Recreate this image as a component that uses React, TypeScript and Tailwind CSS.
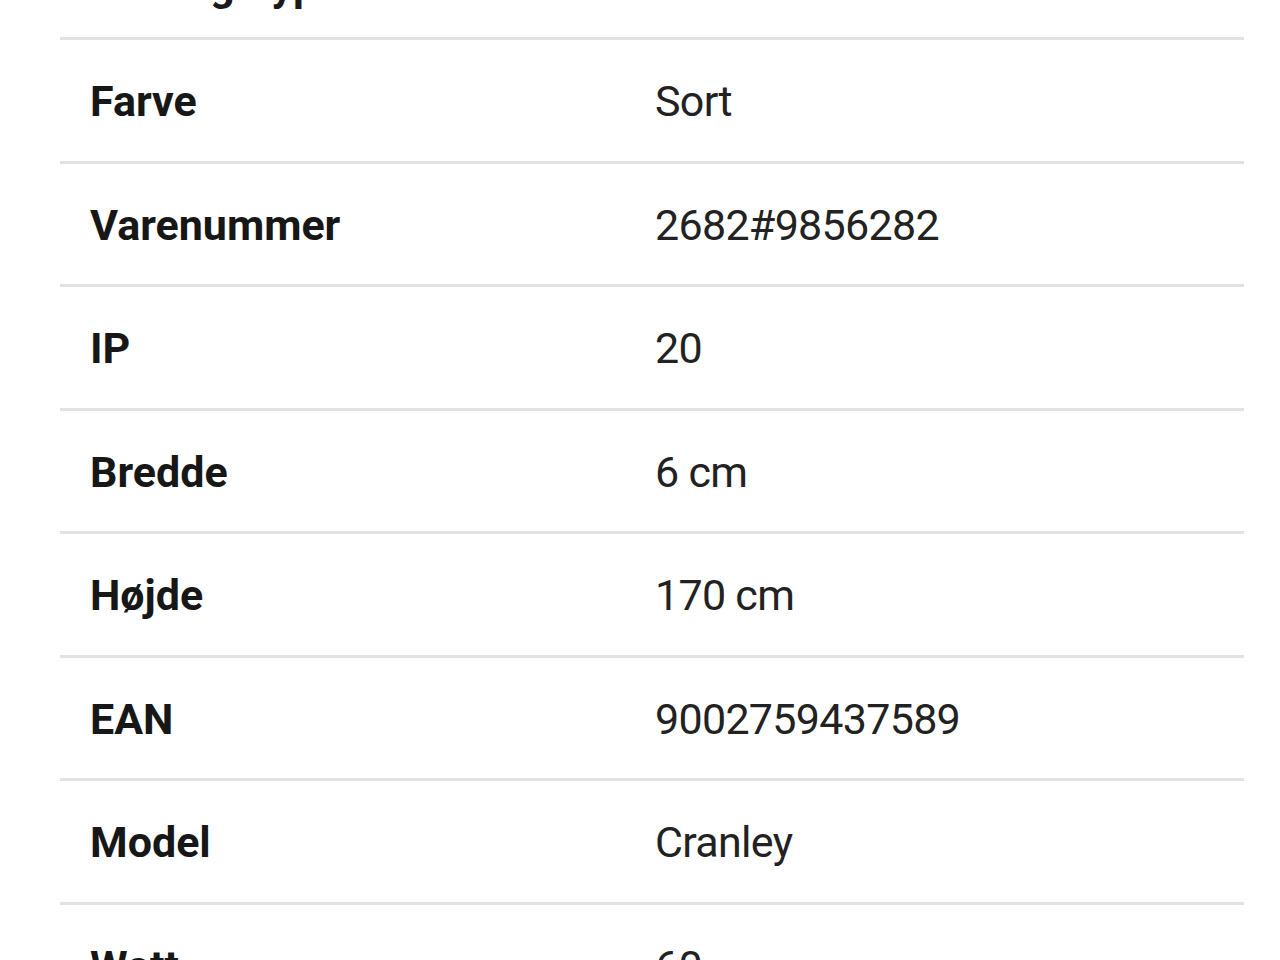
import React from "react";

const rows: [string, string][] = [
  ["Farve", "Sort"],
  ["Varenummer", "2682#9856282"],
  ["IP", "20"],
  ["Bredde", "6 cm"],
  ["Højde", "170 cm"],
  ["EAN", "9002759437589"],
  ["Model", "Cranley"],
  ["Watt", "60"],
];

export default function App() {
  return (
    <div className="w-[1280px] h-[960px] overflow-hidden bg-white" style={{ fontFamily: "Roboto, 'Liberation Sans', sans-serif" }}>
      <div className="pl-[60px] w-[1244px]">
        <div className="h-[37px] relative overflow-hidden">
          <div className="absolute left-[30px] bottom-[30px] text-[43px] font-bold leading-none text-[#1a1a1a]">Fatningstype</div>
        </div>
        {rows.map(([k, v]) => (
          <div key={k} className="border-t-[3px] border-[#e2e2e2] h-[123.57px] flex items-center">
            <div className="w-[595px] shrink-0 pl-[30px] pt-[2px] text-[43px] font-bold text-[#171717]">{k}</div>
            <div className="pt-[2px] text-[43px] text-[#222] tracking-[-0.7px]">{v}</div>
          </div>
        ))}
      </div>
    </div>
  );
}
